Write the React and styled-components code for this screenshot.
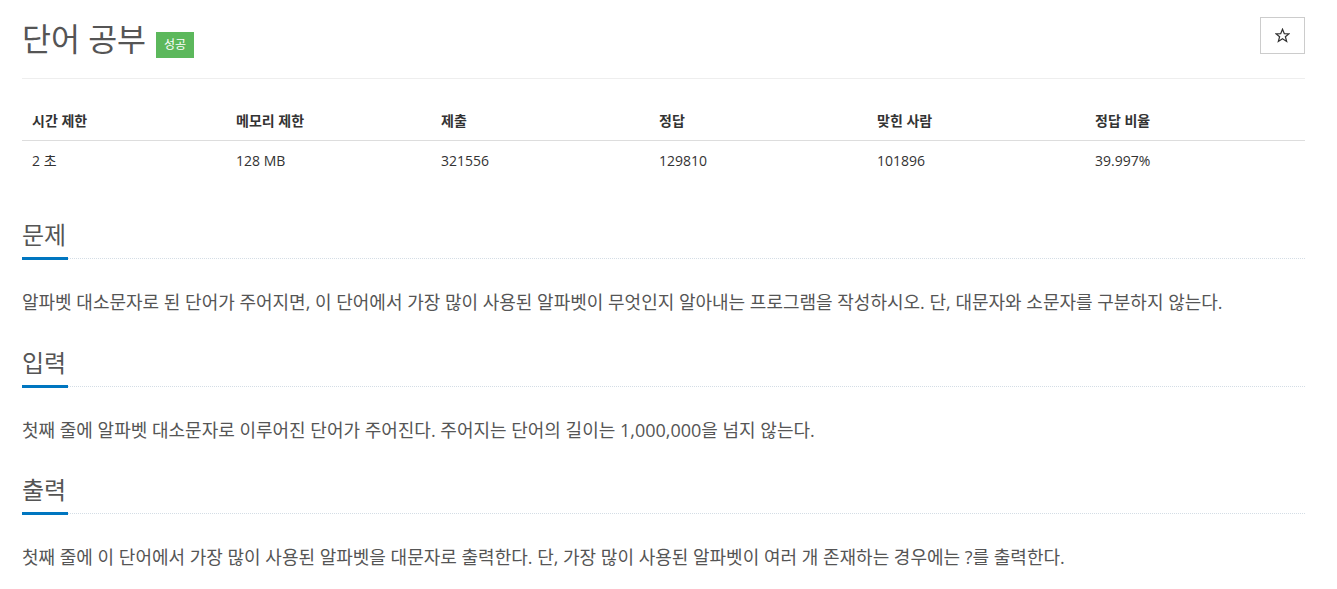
import React from 'react';
import styled, { createGlobalStyle } from 'styled-components';

const BLUE = '#0076c0';
const TEXT = '#555';

const GlobalStyle = createGlobalStyle`
  body {
    margin: 0;
    background: #fff;
    font-family: "Open Sans", "Noto Sans CJK KR", sans-serif;
    color: ${TEXT};
  }
`;

const Container = styled.div`
  padding: 0 32px 0 22px;
`;

const PageHeader = styled.div`
  display: flex;
  justify-content: space-between;
  align-items: flex-start;
  padding-top: 17px;
  padding-bottom: 17px;
  border-bottom: 1px solid #eee;
`;

const Title = styled.h1`
  margin: 0;
  display: flex;
  align-items: center;
  gap: 10px;
  font-size: 31.5px;
  font-weight: 400;
  line-height: 44px;
  color: ${TEXT};
`;

const Badge = styled.span`
  display: inline-flex;
  align-items: center;
  justify-content: center;
  width: 38px;
  height: 26px;
  margin-top: 12px;
  background: #5cb85c;
  color: #fff;
  font-size: 12px;
  font-weight: 400;
`;

const StarButton = styled.button`
  width: 45px;
  height: 37px;
  padding: 0;
  border: 1px solid #ccc;
  background: #fff;
  color: #333;
  cursor: pointer;
  display: flex;
  align-items: center;
  justify-content: center;
`;

const InfoTable = styled.table`
  width: 100%;
  table-layout: fixed;
  margin-top: 21px;
  border-collapse: collapse;
  font-size: 14px;
  color: #333;

  th {
    text-align: left;
    font-weight: 700;
    padding: 11px 10px 9px;
    line-height: 20px;
    border-bottom: 1px solid #ddd;
  }

  td {
    padding: 10px 10px 8px;
    line-height: 20px;
  }
`;

const Section = styled.section`
  margin-top: ${p => p.$first ? '40px' : '31.5px'};
`;

const Headline = styled.div`
  position: relative;
  border-bottom: 1px dotted #d4dde5;
  padding-bottom: 7px;

  h2 {
    margin: 0;
    display: inline-block;
    font-size: 24px;
    font-weight: 400;
    line-height: 32px;
    color: ${TEXT};
  }

  &::after {
    content: '';
    position: absolute;
    left: 0;
    bottom: -2px;
    width: 46px;
    height: 3px;
    background: ${BLUE};
  }
`;

const Text = styled.p`
  margin: 30px 0 0;
  font-size: 18px;
  line-height: 26px;
  color: ${TEXT};
`;

const StarIcon = () => (
  <svg width="15" height="15" viewBox="0 0 24 24" fill="none" stroke="#333" strokeWidth="2" strokeLinejoin="miter">
    <polygon points="12,2 14.9,9 22.5,9.3 16.6,14 18.6,21.5 12,17.3 5.4,21.5 7.4,14 1.5,9.3 9.1,9" />
  </svg>
);

const stats = [
  ['시간 제한', '2 초', 204],
  ['메모리 제한', '128 MB', 205],
  ['제출', '321556', 218],
  ['정답', '129810', 218],
  ['맞힌 사람', '101896', 218],
  ['정답 비율', '39.997%', 220],
];

const sections = [
  ['문제', '알파벳 대소문자로 된 단어가 주어지면, 이 단어에서 가장 많이 사용된 알파벳이 무엇인지 알아내는 프로그램을 작성하시오. 단, 대문자와 소문자를 구분하지 않는다.'],
  ['입력', '첫째 줄에 알파벳 대소문자로 이루어진 단어가 주어진다. 주어지는 단어의 길이는 1,000,000을 넘지 않는다.'],
  ['출력', '첫째 줄에 이 단어에서 가장 많이 사용된 알파벳을 대문자로 출력한다. 단, 가장 많이 사용된 알파벳이 여러 개 존재하는 경우에는 ?를 출력한다.'],
];

export default function App() {
  return (
    <Container>
      <GlobalStyle />
      <PageHeader>
        <Title>
          단어 공부
          <Badge>성공</Badge>
        </Title>
        <StarButton aria-label="즐겨찾기"><StarIcon /></StarButton>
      </PageHeader>

      <InfoTable>
        <colgroup>
          {stats.map(([h, , w]) => <col key={h} style={{ width: w }} />)}
        </colgroup>
        <thead>
          <tr>
            {stats.map(([h]) => <th key={h}>{h}</th>)}
          </tr>
        </thead>
        <tbody>
          <tr>
            {stats.map(([h, v]) => <td key={h}>{v}</td>)}
          </tr>
        </tbody>
      </InfoTable>

      {sections.map(([title, body], i) => (
        <Section key={title} $first={i === 0}>
          <Headline><h2>{title}</h2></Headline>
          <Text>{body}</Text>
        </Section>
      ))}
    </Container>
  );
}
